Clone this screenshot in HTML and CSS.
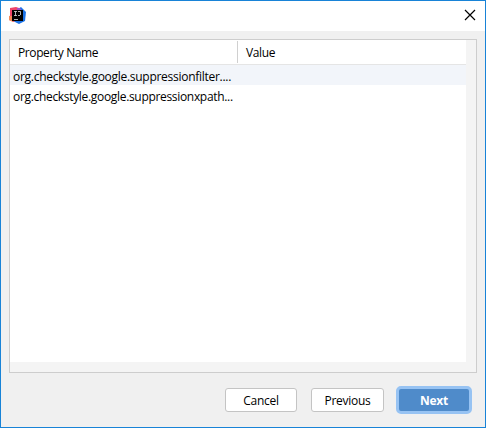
FILE: index.html
```html
<!DOCTYPE html>
<html lang="en">
<head>
<meta charset="utf-8">
<title>Properties</title>
<link rel="stylesheet" href="styles.css">
</head>
<body>
<div class="window">
  <header class="titlebar">
    <svg class="logo" width="18" height="18" viewBox="0 0 18 18">
      <path d="M9 2 12 0l5 5-1 9-6 3-6-3z" fill="#1c74e8"/>
      <path d="M1 1 7 0l3 1-1 8-4 6-5-2 1-5z" fill="#ef4468"/>
      <path d="M0 9h4v6l-4-2z" fill="#f58a55"/>
      <path d="M8 1h3l2 3H8z" fill="#a34fc4"/>
      <path d="M3 3h11v11H3z" fill="#000"/>
      <path d="M5 4.500h3M6.500 4.500v4M5 8.500h3M9 4.500h2.500v3.500M9 8.500h2M5 12.500h4" fill="none" stroke="#ddd" stroke-width=".8"/>
    </svg>
    <svg class="close" width="12" height="12" viewBox="0 0 12 12"><path d="M1 1 11 11M11 1 1 11" stroke="#000" stroke-width="1.2"/></svg>
  </header>
  <main class="panel">
    <div class="table">
      <div class="row head"><span class="cell name"><span class="t-name">Property Name</span></span><span class="cell"><span class="t-value">Value</span></span></div>
      <div class="row striped"><span class="t-row1">org.checkstyle.google.suppressionfilter....</span></div>
      <div class="row"><span class="t-row2">org.checkstyle.google.suppressionxpath...</span></div>
    </div>
  </main>
  <footer class="actions">
    <button class="cancel">Cancel</button>
    <button class="previous">Previous</button>
    <button class="next">Next</button>
  </footer>
</div>
</body>
</html>
```
FILE: styles.css
```css
* { box-sizing: border-box; }
body { margin: 0; font: 12px/20px "Open Sans", "Noto Sans", sans-serif; color: #000; }
.window { width: 486px; height: 428px; border: 1px solid #1883d7; background: #f0f0f0; display: flex; flex-direction: column; }
.titlebar { height: 30px; background: #fff; display: flex; justify-content: space-between; align-items: flex-start; padding: 6px 9px 0 8px; }
.close { margin-top: 2px; }
.panel { margin: 8px 8px 0; width: 468px; height: 334px; border: 1px solid #cdcdcd; background: #f4f4f4; }
.table { width: 456px; height: 322px; background: #fff; }
.row { height: 20px; padding-left: 3px; white-space: nowrap; overflow: hidden; line-height: 23px; }
.striped { background: #f2f5fa; }
.head { height: 25px; padding: 1px 0; border-bottom: 1px solid #e5e5e5; display: flex; line-height: 24px; }
.cell { padding-left: 8px; }
.name { width: 228px; height: 22px; border-right: 1px solid #d0d0d0; }
.t-name { letter-spacing: -0.4px; }
.t-value { letter-spacing: -0.35px; }
.t-row1 { letter-spacing: -0.28px; }
.t-row2 { letter-spacing: -0.32px; }
.actions { display: flex; margin: 13px 13px 0 0; justify-content: flex-end; align-items: center; height: 28px; }
button { height: 24px; padding: 2px 0 0; font: 12px/20px "Open Sans", "Noto Sans", sans-serif; color: #000; background: #fff; border: 1px solid #c4c4c4; border-radius: 3px; letter-spacing: -0.25px; }
.cancel { width: 72px; margin-right: 14px; }
.previous { width: 73px; margin-right: 12px; }
.next { width: 76px; height: 28px; border: 3px solid #97c3f3; border-radius: 5px; background: #4f8bca; color: #fff; font-weight: 700; }
```
